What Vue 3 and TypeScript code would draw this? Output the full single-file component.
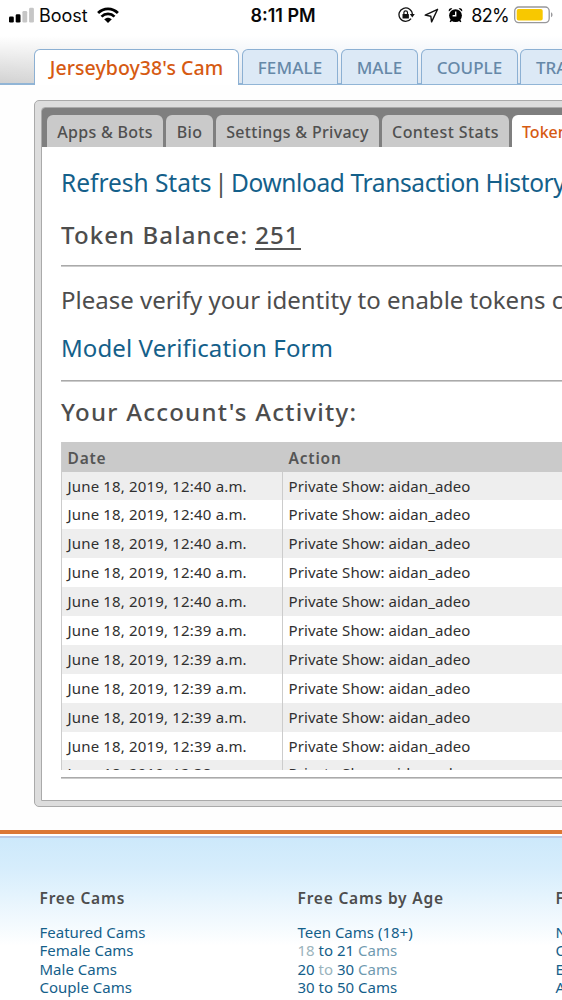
<script setup lang="ts">
interface Tab { label: string; cls: string }

const siteTabs: Tab[] = [
  { label: "Jerseyboy38's Cam", cls: 'mine' },
  { label: 'FEMALE', cls: 'female' },
  { label: 'MALE', cls: 'male' },
  { label: 'COUPLE', cls: 'couple' },
  { label: 'TRANS', cls: 'trans' },
]
const panelTabs: Tab[] = [
  { label: 'Apps & Bots', cls: 'apps' },
  { label: 'Bio', cls: 'bio' },
  { label: 'Settings & Privacy', cls: 'settings' },
  { label: 'Contest Stats', cls: 'contest' },
  { label: 'Token Stats', cls: 'tokens' },
]
const times = ['12:40', '12:40', '12:40', '12:40', '12:40', '12:39', '12:39', '12:39', '12:39', '12:39', '12:38']
const rows = times.map((t) => ({ date: `June 18, 2019, ${t} a.m.`, action: 'Private Show: aidan_adeo' }))

interface Word { text: string; tone?: string }
const firstLinks = ['Featured Cams', 'Female Cams', 'Male Cams', 'Couple Cams']
const ageLinks: Word[][] = [
  [{ text: 'Teen Cams (18+)' }],
  [{ text: '18', tone: 'faded' }, { text: ' to 21 ' }, { text: 'Cams', tone: 'dim' }],
  [{ text: '20 ' }, { text: 'to', tone: 'faded' }, { text: ' 30 ' }, { text: 'Cams', tone: 'dim' }],
  [{ text: '30 to 50 Cams' }],
  [{ text: 'Mature Cams (50+)' }],
]
const lastLinks = ['North American Cams', 'Other Region Cams', 'Euro Russian Cams', 'Asian Cams']
</script>

<template>
  <div class="screen">
    <header class="top">
      <div class="status">
        <div class="carrier">
          <svg class="signal" width="26" height="16" viewBox="0 0 26 16">
            <rect x="0" y="9.5" width="4.8" height="6" rx="1.3" />
            <rect x="6.7" y="7.2" width="4.8" height="8.3" rx="1.3" />
            <rect x="13.4" y="4" width="4.8" height="11.5" rx="1.3" fill="#c6c6c6" />
            <rect x="20.1" y="0.8" width="4.8" height="14.7" rx="1.3" fill="#c6c6c6" />
          </svg>
          <span class="name">Boost</span>
          <svg class="wifi" width="22" height="17" viewBox="0 0 22 17" fill="none" stroke="#000">
            <path d="M1.1 6.1C6.6.5 15.4.5 20.9 6.1" stroke-width="2.8" />
            <path d="M4.5 9.6c3.7-3.7 9.3-3.7 13 0" stroke-width="2.7" />
            <path d="M7.2 12.3c2.1-2.1 5.5-2.1 7.6 0L11 16z" fill="#000" stroke="none" />
          </svg>
        </div>
        <div class="clock">8:11 PM</div>
        <div class="indicators">
          <svg width="17" height="16" viewBox="0 0 17 16" fill="none" stroke="#111">
            <path d="M13.1 11.6A6.7 6.7 0 1 1 14.4 7.6" stroke-width="1.3" />
            <path d="M11.8 7h5l-2.5 3.4z" fill="#111" stroke="none" />
            <rect x="4.5" y="7" width="6.4" height="4.6" rx=".5" fill="#111" stroke="none" />
            <path d="M5.9 7V5.6a1.8 1.8 0 0 1 3.6 0V7" stroke-width="1.2" />
          </svg>
          <svg class="arrow" width="15" height="15" viewBox="0 0 15 15" fill="none" stroke="#111" stroke-width="1.4" stroke-linejoin="round">
            <path d="M13.6 1.3 1.2 7.1l5.6 1.1.8 5.7z" />
          </svg>
          <svg class="alarm" width="15" height="16" viewBox="0 0 15 16">
            <circle cx="7.5" cy="8.6" r="6.4" />
            <path d="M.9 4.5C0 2 2.4.4 4.4 1.6zM14.1 4.5C15 2 12.6.4 10.6 1.6zM2.8 12.5l-1.2 2.1 1.1.6 1.7-1.7zM12.2 12.5l1.2 2.1-1.1.6-1.7-1.7z" />
            <path d="M7.7 4.5v4.2H4.6" fill="none" stroke="#fff" stroke-width="1.4" />
          </svg>
          <span class="percent">82%</span>
          <svg class="battery" width="40" height="18" viewBox="0 0 40 18">
            <rect x=".7" y="1" width="34.5" height="15.6" rx="4" fill="#fff" stroke="#98989b" stroke-width="1.3" />
            <rect x="2.7" y="3" width="26" height="11.6" rx="1.8" fill="#f8c800" />
            <path d="M37 6.3c2 .8 2 4.2 0 5z" fill="#98989b" />
          </svg>
        </div>
      </div>
      <nav class="site-tabs">
        <a v-for="t in siteTabs" :key="t.cls" :class="t.cls"><span>{{ t.label }}</span></a>
      </nav>
    </header>

    <main class="frame">
      <div class="panel">
        <nav class="panel-tabs">
          <a v-for="t in panelTabs" :key="t.cls" :class="t.cls"><span>{{ t.label }}</span></a>
        </nav>
        <div class="content">
          <p class="links"><a class="refresh">Refresh Stats</a><i>|</i><a class="download">Download Transaction History</a></p>
          <h2 class="balance"><span>Token Balance:</span><u>251</u></h2>
          <hr>
          <p class="verify">Please verify your identity to enable tokens cashout.</p>
          <p class="form"><a>Model Verification Form</a></p>
          <hr>
          <h2 class="activity">Your Account's Activity:</h2>
          <div class="log">
            <div class="row head"><span>Date</span><span>Action</span></div>
            <div v-for="(r, i) in rows" :key="i" class="row"><span class="date">{{ r.date }}</span><span class="act">{{ r.action }}</span></div>
          </div>
          <hr class="last">
        </div>
      </div>
    </main>

    <footer>
      <section class="c1">
        <h3>Free Cams</h3>
        <a v-for="l in firstLinks" :key="l">{{ l }}</a>
      </section>
      <section class="c2">
        <h3>Free Cams by Age</h3>
        <a v-for="(l, i) in ageLinks" :key="i"><span v-for="w in l" :key="w.text" :class="w.tone">{{ w.text }}</span></a>
      </section>
      <section class="c3">
        <h3>Free Cams by Region</h3>
        <a v-for="l in lastLinks" :key="l">{{ l }}</a>
      </section>
    </footer>
  </div>
</template>

<style>
body { margin: 0; background: #fff; }
</style>

<style scoped>
.screen { width: 562px; height: 1000px; overflow: hidden; display: flex; flex-direction: column; background: #fefefe; font-family: "Noto Sans", sans-serif; color: #4d4d4d; white-space: nowrap; }
.screen * { box-sizing: border-box; }
p, h2, h3 { margin: 0; font-weight: 400; }
h2, h3 { font-weight: 500; }
hr { margin: 0; border: 0; height: 2px; background: #aaa; border-bottom: 1px solid #ccc; }
svg { display: block; flex: none; }

.top { height: 85px; flex: none; background: linear-gradient(to bottom, #fff 36px, rgba(255,255,255,0) 85px), linear-gradient(to right, #d0d0d0 0, #d6d6d6 60px, #dce6f1 260px, #dce6f1); border-bottom: 2px solid #91b5d6; }
.status { height: 32px; display: grid; grid-template-columns: 1fr auto 1fr; align-items: center; font-family: Inter, sans-serif; color: #080808; }
.carrier { display: flex; align-items: center; padding-left: 9px; }
.signal { margin-top: -2px; }
.name { margin-left: 4px; font-size: 18px; letter-spacing: 0; line-height: 30px; }
.wifi { margin-left: 9px; margin-top: -2px; }
.clock { font-size: 18px; font-weight: 600; line-height: 30px; margin-top: -1px; padding-left: 4px; }
.indicators { display: flex; align-items: center; justify-content: flex-end; padding-right: 8px; margin-top: -2px; }
.arrow { margin-left: 9px; }
.alarm { margin-left: 9px; }
.percent { margin-left: 8px; font-size: 18px; letter-spacing: -.7px; }
.battery { margin-left: 5px; }

.site-tabs { margin-top: 17px; padding-left: 34px; display: flex; gap: 3px; height: 35px; }
.site-tabs a { flex: none; height: 35px; border: 1px solid #8cb0d3; border-bottom: 0; border-radius: 6px 6px 0 0; background: #dce9f6; text-align: center; color: #6688a8; font-size: 17px; font-weight: 500; line-height: 36px; }
.site-tabs .mine { width: 205px; height: 36px; background: #fff; color: #d65a12; font-size: 19.5px; line-height: 35px; letter-spacing: .07px; }
.site-tabs .female { width: 96px; letter-spacing: .15px; }
.site-tabs .male { width: 77px; letter-spacing: .1px; }
.site-tabs .couple { width: 97px; letter-spacing: .05px; }
.site-tabs .trans { width: 90px; margin-left: -1px; padding-left: 15px; text-align: left; }

.frame { margin: 15px 0 0 34px; width: 620px; height: 707px; flex: none; padding: 6px; background: #ddd; border: 1px solid #aaa; border-radius: 5px; }
.panel { height: 694px; border: 1px solid #aaa; border-radius: 4px 0 0 0; background: #fff; }
.panel-tabs { height: 39px; padding: 7px 0 0 5px; background: #7f7f7f; display: flex; gap: 3px; border-radius: 3px 0 0 0; }
.panel-tabs a { flex: none; height: 32px; border-radius: 6px 6px 0 0; background: #cacaca; text-align: center; font-size: 16px; font-weight: 500; line-height: 34px; color: #505050; }
.panel-tabs .apps { width: 116px; letter-spacing: .3px; }
.panel-tabs .bio { width: 47px; letter-spacing: .3px; }
.panel-tabs .settings { width: 163px; letter-spacing: .3px; }
.panel-tabs .contest { width: 127px; letter-spacing: .42px; }
.panel-tabs .tokens { width: 110px; background: #fff; color: #d65a12; text-align: left; padding-left: 10px; }

.content { padding-left: 19px; }
.links { height: 73px; font-size: 24.5px; line-height: 72px; display: flex; }
.links a, .form a { color: #14608a; }
.links i { font-style: normal; width: 20px; text-align: center; }
.refresh { width: 150px; letter-spacing: -.03px; }
.download { letter-spacing: -.38px; }
.balance { height: 45px; display: flex; font-size: 24px; line-height: 30px; letter-spacing: 1.1px; }
.balance u { text-decoration: none; height: 30px; border-bottom: 2px solid #555; margin-left: 7px; width: 46px; }
.verify { height: 62px; padding-top: 14px; font-size: 24px; line-height: 38px; }
.form { height: 51px; font-size: 24px; line-height: 38px; letter-spacing: .1px; }
.activity { height: 60px; line-height: 60px; font-size: 24px; letter-spacing: 1.25px; }
.log { height: 328px; overflow: hidden; }
.row { height: 28.9px; display: grid; grid-template-columns: 221px 1fr; line-height: 28px; font-size: 15px; color: #303030; border-left: 1px solid #ccc; }
.row span { padding-left: 5.5px; border-right: 1px solid #ccc; }
.row:nth-child(even) { background: #eee; }
.row:last-child { line-height: 26px; }
.row.head { height: 29.5px; line-height: 33px; background: #cacaca; color: #555; font-weight: 600; letter-spacing: .8px; font-size: 15.5px; }
.row.head span { border-color: transparent; }
.date { letter-spacing: .17px; }
.act { letter-spacing: .08px; }
.last { margin-top: 7px; }

footer { margin-top: 23px; height: 170px; flex: none; border-top: 4px solid #dc7835; background: linear-gradient(to bottom, #fff 0, #fff 2px, #b9c9e5 2px, #b9c9e5 4px, #cde9fb 4px, #d6edfc 34px, #fff 112px); display: flex; }
footer section { padding-top: 53px; flex: none; }
footer h3 { font-size: 15.5px; line-height: 22px; font-weight: 600; letter-spacing: .8px; margin-bottom: 14px; }
footer a { display: block; color: #14608a; font-size: 15px; line-height: 18.3px; white-space: pre; }
.c1 { margin-left: 39.5px; width: 258px; }
.c2 { width: 258px; }
.c3 { width: 200px; }
.faded { color: #9bb4bd; }
.dim { color: #6f9ab0; }
</style>
